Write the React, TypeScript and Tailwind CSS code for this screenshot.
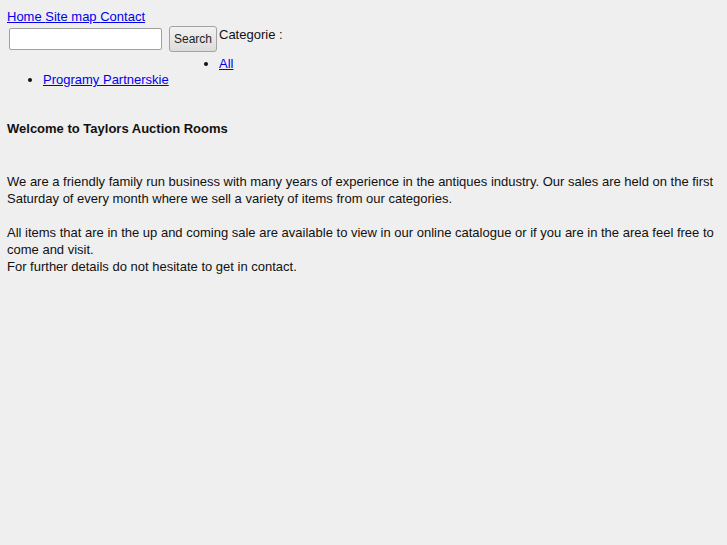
export default function App() {
  return (
    <div className="min-h-[545px] bg-[#efefef] pl-[7px] pr-[5px] pt-[8px] font-['Liberation_Sans',Arial,sans-serif] text-[13px] leading-[17px] text-[#111]">
      {/* top links */}
      <div className="h-[17px]">
        <a href="#" className="text-[#0000ee] underline">Home </a>
        <a href="#" className="text-[#0000ee] underline">Site map </a>
        <a href="#" className="text-[#0000ee] underline">Contact</a>
      </div>

      {/* search + categories */}
      <div className="flex items-start">
        <input
          type="text"
          className="ml-[2px] mt-[3px] h-[22px] w-[153px] rounded-[2px] border border-[#a0a0a0] bg-white px-1 outline-none"
        />
        <button className="ml-[7px] mt-[1px] h-[26px] w-[48px] rounded-[3px] border border-[#a3a3a3] bg-gradient-to-b from-[#f2f2f2] to-[#dcdcdc] pt-[1px] text-[12px] text-[#222]">
          Search
        </button>
        <div className="ml-[2px] pt-[1px]">
          <div>Categorie :</div>
          <ul className="mt-[12px] list-disc pl-0">
            <li>
              <a href="#" className="text-[#0000ee] underline">All</a>
            </li>
          </ul>
        </div>
      </div>

      <ul className="-mt-[1px] list-disc pl-[36px]">
        <li>
          <a href="#" className="text-[#0000ee] underline">Programy Partnerskie</a>
        </li>
      </ul>

      {/* content */}
      <div className="mt-[32px] font-bold">Welcome to Taylors Auction Rooms</div>
      <div className="mt-[36px]">
        <p>
          We are a friendly family run business with many years of experience in the antiques industry. Our sales are held on the first Saturday of every month where we sell a variety of items from our categories.
        </p>
        <p className="mt-[17px]">
          All items that are in the up and coming sale are available to view in our online catalogue or if you are in the area feel free to come and visit.
          <br />
          For further details do not hesitate to get in contact.
        </p>
      </div>
    </div>
  );
}
